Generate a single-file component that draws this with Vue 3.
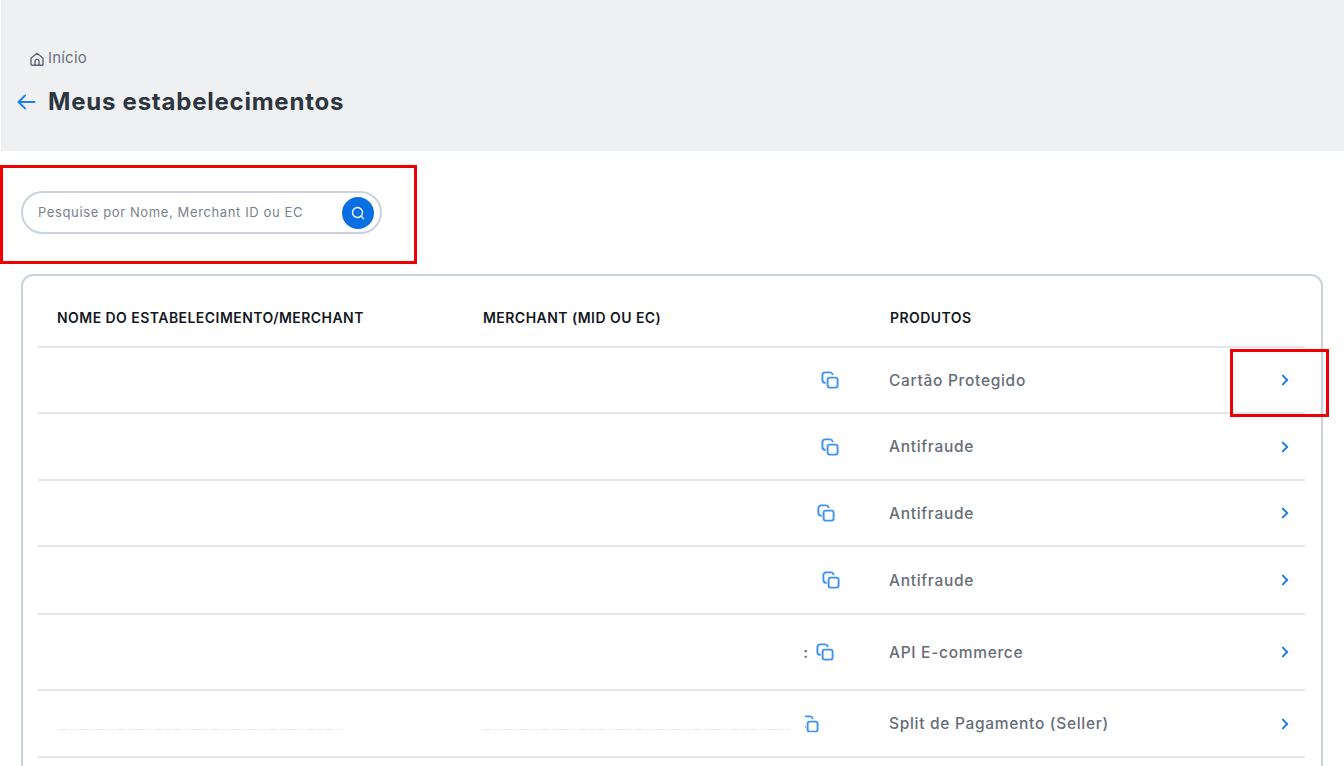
<script setup>
const rows = [
  { product: 'Cartão Protegido', height: 66, iconGap: 51 },
  { product: 'Antifraude', height: 67, iconGap: 51 },
  { product: 'Antifraude', height: 66, iconGap: 55 },
  { product: 'Antifraude', height: 68, iconGap: 50 },
  { product: 'API E-commerce', height: 76, iconGap: 56, colon: true },
  { product: 'Split de Pagamento (Seller)', height: 67, iconGap: 71, cut: true },
  { product: '', height: 20, iconGap: 0, empty: true }
]
</script>

<template>
  <div class="page">
    <header class="hero">
      <nav class="crumb">
        <svg class="home" viewBox="0 0 16 16" fill="none" stroke="#5f6775" stroke-width="1.4" stroke-linejoin="round" stroke-linecap="round">
          <path d="M2 7.2 8 2.2l6 5v6.2a.9.9 0 0 1-.9.9H2.9a.9.9 0 0 1-.9-.9z" />
          <path d="M6 14.2V10.4a2 2 0 0 1 4 0v3.8" />
        </svg>
        <span>Início</span>
      </nav>
      <div class="title-row">
        <svg class="back" viewBox="0 0 20 16" fill="none" stroke="#1b7fe8" stroke-width="2" stroke-linecap="round" stroke-linejoin="round">
          <path d="M18 8H2M8.5 1.6 2 8l6.5 6.4" />
        </svg>
        <h1>Meus estabelecimentos</h1>
      </div>
    </header>

    <section class="search-zone">
      <div class="search">
        <span class="placeholder">Pesquise por Nome, Merchant ID ou EC</span>
        <button class="search-btn" type="button" aria-label="Pesquisar">
          <svg viewBox="0 0 16 16" fill="none" stroke="#fff" stroke-width="1.3" stroke-linecap="round">
            <circle cx="7.5" cy="7.5" r="5" />
            <path d="m11.2 11.2 2.4 2.4" />
          </svg>
        </button>
      </div>
      <div class="mark mark-search"></div>
    </section>

    <section class="card">
      <div class="row head">
        <div>NOME DO ESTABELECIMENTO/MERCHANT</div>
        <div>MERCHANT (MID OU EC)</div>
        <div>PRODUTOS</div>
      </div>
      <div v-for="(row, i) in rows" :key="i" class="row body" :style="{ height: row.height + 'px' }">
        <template v-if="!row.empty">
          <div class="cell name"><span v-if="row.cut" class="ghost ghost-name"></span></div>
          <div class="cell merchant" :style="{ paddingRight: row.iconGap + 'px' }">
            <span v-if="row.cut" class="ghost ghost-mid"></span>
            <span v-if="row.colon" class="colon">:</span>
            <svg class="copy" :class="{ cut: row.cut }" viewBox="0 0 18 18" fill="none" stroke="#3d93f0" stroke-width="1.9" stroke-linecap="round" stroke-linejoin="round">
              <rect x="6.6" y="6.6" width="10" height="10" rx="2" />
              <path d="M3.9 11.8A2.8 2.8 0 0 1 1.4 9V4.2a2.8 2.8 0 0 1 2.8-2.8H9a2.8 2.8 0 0 1 2.6 2" />
            </svg>
          </div>
          <div class="cell product">{{ row.product }}</div>
          <svg class="chevron" viewBox="0 0 8 12" fill="none" stroke="#1b7fe8" stroke-width="2" stroke-linecap="round" stroke-linejoin="round">
            <path d="M1.8 1.6 6.2 6l-4.4 4.4" />
          </svg>
        </template>
      </div>
      <div class="mark mark-chevron"></div>
    </section>
  </div>
</template>

<style scoped>
.page {
  position: relative;
  width: 1344px;
  height: 766px;
  overflow: hidden;
  background: #fff;
  font-family: "Inter", "Noto Sans", sans-serif;
  color: #2d3540;
}
.hero {
  height: 151px;
  margin-left: 1px;
  background: #eff0f2;
  box-sizing: border-box;
  padding-top: 47px;
}
.crumb {
  display: flex;
  align-items: center;
  gap: 3px;
  margin-left: 28px;
  height: 20px;
  font-size: 15px;
  letter-spacing: 0.2px;
  color: #6a7280;
}
.home {
  width: 16px;
  height: 16px;
  margin-top: 3px;
}
.title-row {
  display: flex;
  align-items: center;
  margin-top: 15px;
  margin-left: 15px;
  height: 40px;
}
.back {
  width: 21px;
  height: 16px;
}
h1 {
  margin: 0 0 0 11px;
  font-size: 24px;
  font-weight: 700;
  letter-spacing: 0.77px;
  line-height: 40px;
  color: #2d3540;
}
.search-zone {
  position: relative;
  height: 123px;
  padding: 40px 0 0 21px;
  box-sizing: border-box;
}
.search {
  width: 361px;
  height: 43px;
  box-sizing: border-box;
  border: 2px solid #cbd2de;
  border-radius: 22px;
  display: flex;
  align-items: center;
  justify-content: space-between;
  padding: 0 6px 0 15px;
}
.placeholder {
  margin-bottom: 2px;
  font-size: 13px;
  letter-spacing: 0.62px;
  color: #7b818c;
  white-space: nowrap;
}
.search-btn {
  width: 32px;
  height: 32px;
  border: 0;
  padding: 0;
  border-radius: 50%;
  background: #0a6fe0;
  display: flex;
  align-items: center;
  justify-content: center;
}
.search-btn svg {
  width: 16px;
  height: 16px;
}
.mark {
  position: absolute;
  box-sizing: border-box;
  border: 3px solid #f00000;
}
.mark-search {
  left: 0;
  top: 14px;
  width: 417px;
  height: 99px;
}
.mark-chevron {
  left: 1207px;
  top: 73px;
  width: 99px;
  height: 68px;
}
.card {
  position: relative;
  margin-left: 21px;
  width: 1302px;
  height: 600px;
  box-sizing: border-box;
  border: 2px solid #cbd2de;
  border-radius: 12px;
  padding: 0 16px 0 15px;
}
.row {
  display: grid;
  grid-template-columns: 426px 407px 1fr 40px;
  align-items: center;
  padding-left: 19px;
  border-bottom: 2px solid #e4e8ec;
  box-sizing: border-box;
}
.row:last-of-type {
  border-bottom: 0;
}
.head {
  height: 72px;
  padding-top: 13px;
  font-size: 14px;
  font-weight: 600;
  letter-spacing: 0.45px;
  color: #14181f;
}
.cell {
  min-width: 0;
}
.name {
  position: relative;
  align-self: stretch;
}
.merchant {
  position: relative;
  align-self: stretch;
  display: flex;
  justify-content: flex-end;
  align-items: center;
}
.copy {
  width: 18px;
  height: 18px;
}
.copy.cut {
  clip-path: inset(0 0 0 4px);
}
.colon {
  margin-right: 8px;
  font-size: 15px;
  font-weight: 600;
  color: #5f6775;
}
.ghost {
  position: absolute;
  left: 0;
  top: calc(50% + 5px);
  height: 1px;
  background: repeating-linear-gradient(90deg, #e4e6e9 0 9px, transparent 9px 11px, #eeeff1 11px 17px, transparent 17px 19px);
}
.ghost-name {
  width: 284px;
  margin-left: 2px;
}
.ghost-mid {
  width: 307px;
}
.product {
  margin-left: -1px;
  font-size: 15.5px;
  font-weight: 500;
  letter-spacing: 0.7px;
  color: #666d78;
  white-space: nowrap;
}
.chevron {
  width: 8px;
  height: 12px;
  justify-self: center;
}
</style>
